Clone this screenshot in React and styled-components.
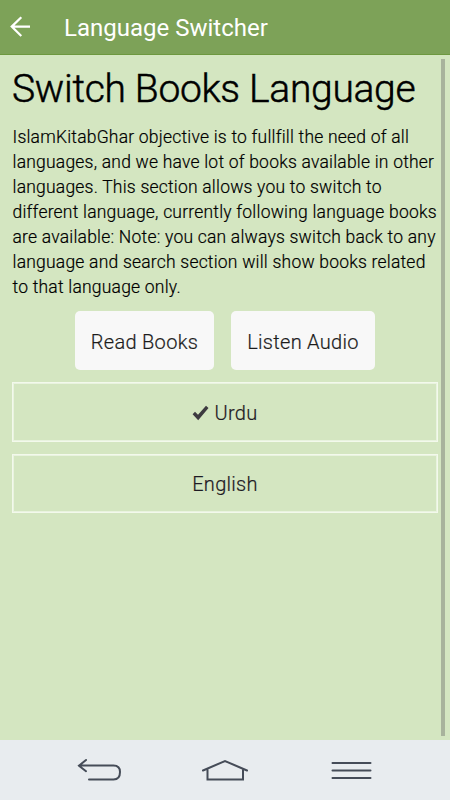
import React, { useState } from "react";
import styled, { createGlobalStyle } from "styled-components";

const GlobalStyle = createGlobalStyle`
  * {
    box-sizing: border-box;
  }

  body {
    margin: 0;
    font-family: Roboto, "Liberation Sans", sans-serif;
    background: #d4e6c1;
  }
`;

const Screen = styled.div`
  display: flex;
  flex-direction: column;
  width: 450px;
  height: 800px;
  overflow: hidden;
  background: #d4e6c1;
`;

const Header = styled.header`
  display: flex;
  align-items: center;
  height: 55px;
  padding-left: 10px;
  background: #7da258;
  border-bottom: 1px solid #6d983f;
`;

const BackButton = styled.button`
  display: flex;
  width: 54px;
  padding: 0;
  border: none;
  background: none;
`;

const Title = styled.div`
  color: white;
  font-size: 24px;
  line-height: 28px;
  padding-top: 2px;
`;

const Body = styled.div`
  flex: 1;
  display: flex;
  justify-content: space-between;
  padding: 4px 5px 4px 12px;
`;

const Content = styled.main`
  width: 426px;
`;

const ScrollBar = styled.div`
  width: 4px;
  background: #a8b39c;
`;

const Heading = styled.h1`
  margin: 0;
  font-size: 39px;
  font-weight: 300;
  line-height: 60px;
  letter-spacing: -0.3px;
  white-space: nowrap;
  -webkit-text-stroke: 0.5px #000;
`;

const Text = styled.p`
  margin: 5px -2px 12px 0;
  padding: 1px 0 0 0.5px;
  height: 175px;
  color: #000;
  font-size: 17.5px;
  font-weight: 300;
  line-height: 25px;
  letter-spacing: 0.21px;
  -webkit-text-stroke: 0.2px #000;
`;

const ButtonRow = styled.div`
  display: flex;
  justify-content: center;
  gap: 17px;
  margin-bottom: 12px;
`;

const ModeButton = styled.button`
  width: ${({ $width }) => $width}px;
  height: 59px;
  padding: 3px 0 0;
  border: none;
  border-radius: 5px;
  background: #f8f8f8;
  color: #1c1c1c;
  font-family: inherit;
  font-size: 20px;
  font-weight: 300;
  letter-spacing: 0.3px;
  white-space: nowrap;
  -webkit-text-stroke: 0.2px #1c1c1c;
`;

const LanguageList = styled.div`
  display: grid;
  gap: 12px;
`;

const LanguageButton = styled.button`
  display: flex;
  align-items: center;
  justify-content: center;
  gap: 5px;
  height: 59.5px;
  padding: 2px 0 0;
  border: 1px solid #f3f9ec;
  box-shadow: inset 0 0 0 1px #e9f3df;
  background: none;
  color: #1e1a24;
  font-family: inherit;
  font-size: 20px;
  font-weight: 300;
  letter-spacing: 0.3px;
  -webkit-text-stroke: 0.2px #1e1a24;
`;

const NavBar = styled.nav`
  display: flex;
  justify-content: space-between;
  height: 60px;
  padding: 15px 76px 0 75px;
  background: #e8ecef;
`;

const BackIcon = () => (
  <svg width="20" height="22" viewBox="0 0 20 22" fill="none" stroke="white" strokeWidth="2.2">
    <path d="M11.3 1.2L1.7 10.6L11.3 20M2 10.6H20" />
  </svg>
);

const CheckIcon = () => (
  <svg width="17" height="16" viewBox="0 0 17 16" fill="#3d3b40">
    <path d="M0.6 9.2L3 6.8L6 9.7L14 0.8L16.5 3L6.2 15.2Z" />
  </svg>
);

const NavIcon = ({ children }) => (
  <svg width="48" height="30" viewBox="0 0 48 30" fill="none" stroke="#454c58" strokeWidth="2" strokeLinecap="round">
    {children}
  </svg>
);

const languages = ["Urdu", "English"];

const App = () => {
  const [selected, setSelected] = useState("Urdu");

  return (
    <Screen>
      <GlobalStyle />
      <Header>
        <BackButton aria-label="Back">
          <BackIcon />
        </BackButton>
        <Title>Language Switcher</Title>
      </Header>
      <Body>
        <Content>
          <Heading>Switch Books Language</Heading>
          <Text>
            IslamKitabGhar objective is to fullfill the need of all languages, and we have lot of
            books available in other languages. This section allows you to switch to different
            language, currently following language books are available: Note: you can always switch
            back to any language and search section will show books related to that language only.
          </Text>
          <ButtonRow>
            <ModeButton $width={139}>Read Books</ModeButton>
            <ModeButton $width={144}>Listen Audio</ModeButton>
          </ButtonRow>
          <LanguageList>
            {languages.map(language => (
              <LanguageButton key={language} onClick={() => setSelected(language)}>
                {selected === language ? <CheckIcon /> : null}
                {language}
              </LanguageButton>
            ))}
          </LanguageList>
        </Content>
        <ScrollBar />
      </Body>
      <NavBar>
        <NavIcon>
          <path d="M11 5L4 10.7L11 16.2M4 10.5H38.5Q45 10.5 45 17Q45 24.5 38.5 24.5H14" />
        </NavIcon>
        <NavIcon>
          <path d="M2 15.5L24 6L46 15.5M6.5 14V24.5H42V14" />
        </NavIcon>
        <NavIcon>
          <path d="M6.5 8H44.5M6.5 15.5H44.5M6.5 23H44.5" />
        </NavIcon>
      </NavBar>
    </Screen>
  );
};

export default App;
